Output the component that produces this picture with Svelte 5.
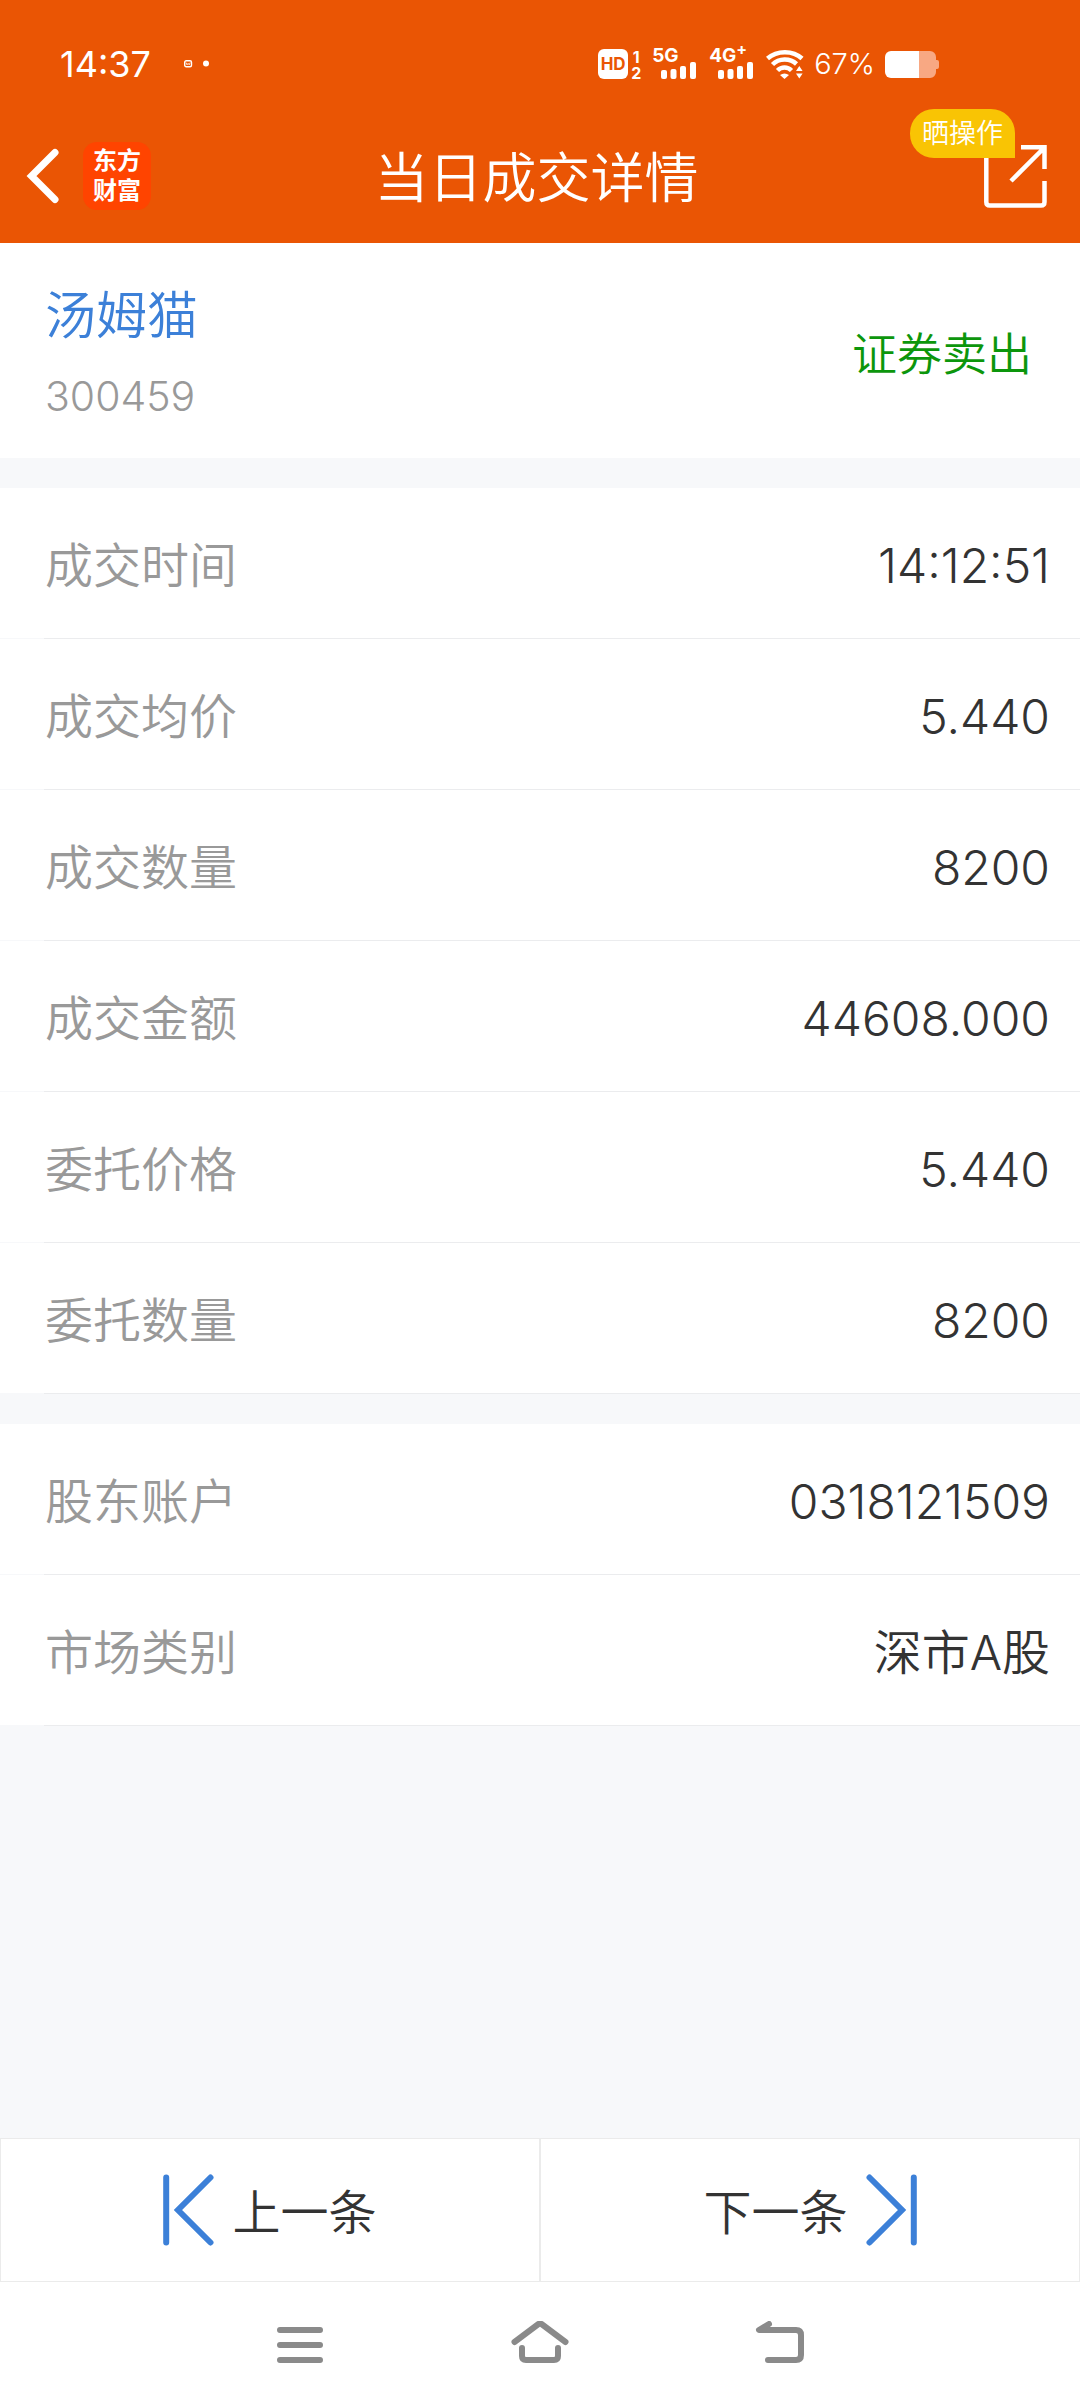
<script>
  const trade = [
    ['成交时间', '14:12:51'],
    ['成交均价', '5.440'],
    ['成交数量', '8200'],
    ['成交金额', '44608.000'],
    ['委托价格', '5.440'],
    ['委托数量', '8200']
  ];
  const account = [
    ['股东账户', '0318121509'],
    ['市场类别', '深市A股']
  ];
</script>

{#snippet rows(items)}
  <dl class="list">
    {#each items as [label, value]}
      <div class="row">
        <dt>{label}</dt>
        <dd>{value}</dd>
      </div>
    {/each}
  </dl>
{/snippet}

{#snippet bars()}
  <svg width="36" height="18" viewBox="0 0 36 18" fill="#fff">
    <rect x="0" y="8" width="6" height="9" rx="2" />
    <rect x="9.500" y="7" width="6" height="10" rx="2" />
    <rect x="19" y="4" width="6" height="13" rx="2" />
    <rect x="29" y="0" width="6" height="17" rx="2" />
  </svg>
{/snippet}

<div class="page">
  <header>
    <div class="status">
      <time>14:37</time>
      <svg class="notes" width="26" height="8" viewBox="0 0 26 8">
        <rect x="0.7" y="0.7" width="6.8" height="6" rx="1.5" fill="none" stroke="#fff" stroke-width="1.4" />
        <path d="M2 2.5l1 2.4 1.1-1.6 1.1 1.6 1-2.4" fill="none" stroke="#fff" stroke-width="0.8" />
        <circle cx="22" cy="3.5" r="3" fill="#fff" />
      </svg>
      <div class="indicators">
        <div class="hd">
          <span class="hd-box">HD</span>
          <span class="sims"><span>1</span><span>2</span></span>
        </div>
        <div class="signal">
          <span>5G</span>
          {@render bars()}
        </div>
        <div class="signal wide">
          <span>4G<sup>+</sup></span>
          {@render bars()}
        </div>
        <svg class="wifi" width="38" height="30" viewBox="0 0 38 30" fill="none" stroke="#fff" stroke-width="4.500">
          <path d="M1.500 9.500C11 1 27 1 36 9.500" />
          <path d="M6.500 15.500C13 9 24 9 30.500 15" />
          <path d="M11.500 21.500C15.500 17.500 21.500 17.500 25.500 21.500" />
          <path d="M14 26Q18.500 23 23 26L18.500 30z" fill="#fff" stroke="none" />
          <path d="M30 22l3.300-5 3.300 5zM30 24.500l3.300 5 3.300-5z" fill="#fff" stroke="none" />
        </svg>
        <span class="percent">67%</span>
        <svg class="battery" width="54" height="27" viewBox="0 0 54 27">
          <path d="M34 0h11a6 6 0 0 1 6 6v3h1a2 2 0 0 1 2 2v5a2 2 0 0 1-2 2h-1v3a6 6 0 0 1-6 6h-11z" fill="#f8a883" />
          <path d="M34 0H6a6 6 0 0 0-6 6v15a6 6 0 0 0 6 6h28z" fill="#fff" />
        </svg>
      </div>
    </div>
    <div class="bar">
      <div class="left">
        <button class="icon" aria-label="返回">
          <svg width="34" height="56" viewBox="0 0 34 56" fill="none" stroke="#fff" stroke-width="7" stroke-linecap="round" stroke-linejoin="miter">
            <path d="M29 4.500L5.500 28L29 51.500" />
          </svg>
        </button>
        <span class="logo">东方<br />财富</span>
      </div>
      <h1>当日成交详情</h1>
      <div class="right">
        <button class="icon share" aria-label="分享">
          <svg width="63" height="64" viewBox="0 0 63 64" fill="none" stroke="#fff" stroke-width="4.500">
            <path d="M2.300 8V58q0 3.500 3.500 3.500H57q3.500 0 3.500-3.500V37M37 3.200H60.500V25M60 4L27 37" />
          </svg>
          <span class="badge">晒操作</span>
        </button>
      </div>
    </div>
  </header>

  <main>
    <section class="stock">
      <div>
        <h2>汤姆猫</h2>
        <p class="code">300459</p>
      </div>
      <span class="side">证券卖出</span>
    </section>
    {@render rows(trade)}
    {@render rows(account)}
  </main>

  <div class="pager">
    <button>
      <svg width="51" height="72" viewBox="0 0 51 72" fill="none" stroke="#3c80d8" stroke-width="6" stroke-linecap="round">
        <path d="M3.200 3.500V68.500M47.500 3.500L15 36L47.500 68.500" />
      </svg>
      <span>上一条</span>
    </button>
    <button>
      <span>下一条</span>
      <svg width="51" height="72" viewBox="0 0 51 72" fill="none" stroke="#3c80d8" stroke-width="6" stroke-linecap="round">
        <path d="M47.800 3.500V68.500M3.500 3.500L36 36L3.500 68.500" />
      </svg>
    </button>
  </div>

  <nav aria-label="系统导航">
    <button aria-label="最近任务">
      <svg width="60" height="48" viewBox="0 0 60 48"><path d="M10 9H50M10 24H50M10 39H50" /></svg>
    </button>
    <button aria-label="主页">
      <svg width="60" height="48" viewBox="0 0 60 48"><path d="M4.500 21L28.500 3Q30 2 31.500 3L55.500 21M12 27V35q0 4 4 4H44q4 0 4-4V27" /></svg>
    </button>
    <button aria-label="返回上一级">
      <svg width="60" height="48" viewBox="0 0 60 48"><path d="M19 3L9 9H46q5 0 5 5V34q0 5-5 5H18" /></svg>
    </button>
  </nav>
</div>

<style>
  :global(body) {
    margin: 0;
  }
  .page {
    min-height: 100vh;
    display: flex;
    flex-direction: column;
    background: #f7f8fa;
    color: #333;
    font-family: Inter, 'Noto Sans CJK SC', sans-serif;
    font-size: 48px;
    line-height: 60px;
    font-weight: 350;
  }
  button {
    border: 0;
    padding: 0;
    background: none;
    font: inherit;
    color: inherit;
    cursor: pointer;
  }
  svg {
    display: block;
    flex: none;
  }
  h1,
  h2,
  p,
  dl,
  dd {
    margin: 0;
    font-weight: inherit;
  }
  header {
    background: #ea5504;
    color: #fff;
    padding-bottom: 28px;
  }
  .status {
    display: flex;
    align-items: center;
    padding: 44px 141px 0 60px;
    height: 40px;
    font-size: 36px;
    line-height: 40px;
    font-weight: 400;
  }
  .notes {
    margin-left: 33px;
  }
  .indicators {
    margin-left: auto;
    display: flex;
    align-items: center;
  }
  .hd {
    display: flex;
    gap: 3px;
    height: 30px;
    font-weight: 700;
  }
  .hd-box {
    width: 30px;
    border-radius: 6px;
    background: #fff;
    color: #ea5504;
    font-size: 17px;
    line-height: 30px;
    text-align: center;
  }
  .sims {
    display: flex;
    flex-direction: column;
    width: 10px;
    font-size: 16px;
    line-height: 16px;
    text-align: center;
  }
  .signal {
    display: flex;
    flex-direction: column;
    height: 30px;
    width: 45px;
    margin-left: 11px;
    font-size: 19px;
    line-height: 14px;
    font-weight: 700;
  }
  .signal svg {
    margin: -1px 0 0 9px;
  }
  .signal sup {
    font-size: 16px;
    line-height: 0;
  }
  .signal.wide {
    margin-left: 12px;
  }
  .wifi {
    margin-left: 12px;
  }
  .percent {
    font-size: 29px;
    font-weight: 300;
    margin: 0 10px;
  }
  .bar {
    display: grid;
    grid-template-columns: 1fr auto 1fr;
    align-items: start;
    padding: 58px 33px 0 26px;
  }
  .left,
  .right {
    display: flex;
    align-items: center;
    height: 68px;
  }
  .left {
    gap: 23px;
  }
  .right {
    justify-content: flex-end;
  }
  .logo {
    width: 68px;
    box-sizing: border-box;
    padding: 4px 0;
    border-radius: 14px;
    background: #ff4400;
    font-size: 24px;
    line-height: 30px;
    font-weight: 700;
    text-align: center;
  }
  h1 {
    font-size: 54px;
    line-height: 73px;
  }
  .share {
    position: relative;
  }
  .badge {
    position: absolute;
    right: 32px;
    bottom: 50px;
    padding: 0 12px;
    border-radius: 24px 24px 0 24px;
    background: #f9c404;
    font-size: 27px;
    line-height: 49px;
    white-space: nowrap;
  }
  .stock {
    display: flex;
    align-items: center;
    justify-content: space-between;
    padding: 40px 48px 32px 45px;
    background: #fff;
  }
  h2 {
    font-size: 51px;
    line-height: 66px;
    color: #3c80d8;
  }
  .code {
    margin-top: 17px;
    font-size: 41px;
    color: #999;
  }
  .side {
    font-size: 45px;
    color: #0c960c;
  }
  .list {
    margin-top: 30px;
  }
  .row {
    display: flex;
    justify-content: space-between;
    padding: 48px 30px 42px 45px;
    background: #fff;
    border-bottom: 1px solid;
    border-image: linear-gradient(to right, #f7f8fa 45px, #ebecee 45px) 1;
  }
  dt {
    color: #999;
  }
  .pager {
    display: grid;
    grid-template-columns: 1fr 1fr;
    margin-top: auto;
    background: #fff;
  }
  .pager button {
    display: flex;
    align-items: center;
    justify-content: center;
    gap: 18px;
    padding: 35px 0;
    border: 1px solid #ebebeb;
  }
  .pager span {
    padding-top: 5px;
  }
  nav {
    display: grid;
    grid-template-columns: repeat(3, 240px);
    justify-content: center;
    padding: 39px 0;
    background: #fff;
  }
  nav button {
    display: flex;
    justify-content: center;
  }
  nav svg {
    fill: none;
    stroke: #8a8a8a;
    stroke-width: 6;
    stroke-linecap: round;
    stroke-linejoin: round;
  }
</style>
